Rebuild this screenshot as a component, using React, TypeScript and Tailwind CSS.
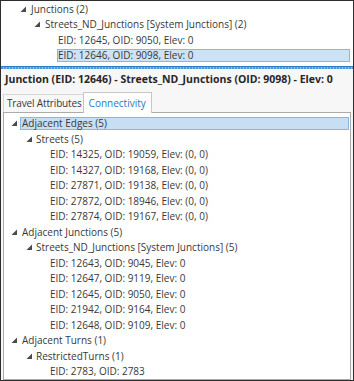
import React from "react";

const Tri = () => (
  <svg width="6" height="6" viewBox="0 0 6 6" className="shrink-0">
    <polygon points="6,0.5 6,6 0.5,6" fill="#4a4a4a" />
  </svg>
);

const edges = [
  "EID: 14325, OID: 19059, Elev: (0, 0)",
  "EID: 14327, OID: 19168, Elev: (0, 0)",
  "EID: 27871, OID: 19138, Elev: (0, 0)",
  "EID: 27872, OID: 18946, Elev: (0, 0)",
  "EID: 27874, OID: 19167, Elev: (0, 0)",
];

const juncs = [
  "EID: 12643, OID: 9045, Elev: 0",
  "EID: 12647, OID: 9119, Elev: 0",
  "EID: 12645, OID: 9050, Elev: 0",
  "EID: 21942, OID: 9164, Elev: 0",
  "EID: 12648, OID: 9109, Elev: 0",
];

export default function App() {
  return (
    <div className="w-[354px] h-[381px] border border-[#2e2e2e] bg-white overflow-hidden flex flex-col font-['Open_Sans','Noto_Sans',sans-serif] text-[10px] text-[#383838] leading-none whitespace-nowrap">
      {/* top tree */}
      <div className="flex flex-col">
        <div className="h-[15.5px] flex items-center pl-[19px]">
          <Tri />
          <span className="ml-[5px]">Junctions (2)</span>
        </div>
        <div className="h-[15.5px] flex items-center pl-[33px]">
          <Tri />
          <span className="ml-[5px]">Streets_ND_Junctions [System Junctions] (2)</span>
        </div>
        <div className="h-[15.5px] flex items-center pl-[57px]">
          <span>EID: 12645, OID: 9050, Elev: 0</span>
        </div>
        <div className="h-[15.5px] flex items-center pl-[56px] pr-[3px]">
          <div className="flex-1 h-[13px] border border-[#84b9e6] bg-[#cce3f6] flex items-center">
            <span>EID: 12646, OID: 9098, Elev: 0</span>
          </div>
        </div>
      </div>

      {/* splitter */}
      <div className="mt-[3px] h-[5px] border-t border-[#2f7fcf] bg-[repeating-linear-gradient(90deg,#4f97dc_0px,#4f97dc_2px,#8cc0ec_2px,#8cc0ec_3px)]" />

      {/* lower panel */}
      <div className="flex-1 flex flex-col bg-[#f7f7f7]">
        <div className="h-[22px] flex items-center pl-[4px] font-bold text-[10.5px] text-[#262626]">
          Junction (EID: 12646) - Streets_ND_Junctions (OID: 9098) - Elev: 0
        </div>
        <div className="h-[21px] flex items-end pl-[2px]">
          <div className="h-[18px] border border-b-0 border-r-0 border-[#d6d6d6] flex items-center pl-[3px] pr-[1px] tracking-[-0.15px]">
            Travel Attributes
          </div>
          <div className="h-[21px] -mb-px z-10 bg-white border border-b-0 border-[#c6c6c6] flex items-center px-[5px] text-[#1e78c8]">
            Connectivity
          </div>
        </div>
        <div className="flex-1 mx-[2px] bg-white border border-[#ababab] pt-[3px] flex flex-col">
          <div className="h-[15.5px] flex items-center pl-[7px] pr-[1px]">
            <Tri />
            <div className="ml-[3px] flex-1 h-[13px] border border-[#84b9e6] bg-[#c8dff3] flex items-center px-[1px]">
              <span>Adjacent Edges (5)</span>
            </div>
          </div>
          <div className="h-[15.5px] flex items-center pl-[22px]">
            <Tri />
            <span className="ml-[4px]">Streets (5)</span>
          </div>
          {edges.map((e) => (
            <div key={e} className="h-[15.5px] flex items-center pl-[46px]">
              {e}
            </div>
          ))}
          <div className="h-[15.5px] flex items-center pl-[7px]">
            <Tri />
            <span className="ml-[5px]">Adjacent Junctions (5)</span>
          </div>
          <div className="h-[15.5px] flex items-center pl-[22px]">
            <Tri />
            <span className="ml-[4px]">Streets_ND_Junctions [System Junctions] (5)</span>
          </div>
          {juncs.map((e) => (
            <div key={e} className="h-[15.5px] flex items-center pl-[46px]">
              {e}
            </div>
          ))}
          <div className="h-[15.5px] flex items-center pl-[7px]">
            <Tri />
            <span className="ml-[5px]">Adjacent Turns (1)</span>
          </div>
          <div className="h-[15.5px] flex items-center pl-[22px]">
            <Tri />
            <span className="ml-[4px]">RestrictedTurns (1)</span>
          </div>
          <div className="h-[15.5px] flex items-center pl-[46px]">EID: 2783, OID: 2783</div>
        </div>
      </div>
    </div>
  );
}
